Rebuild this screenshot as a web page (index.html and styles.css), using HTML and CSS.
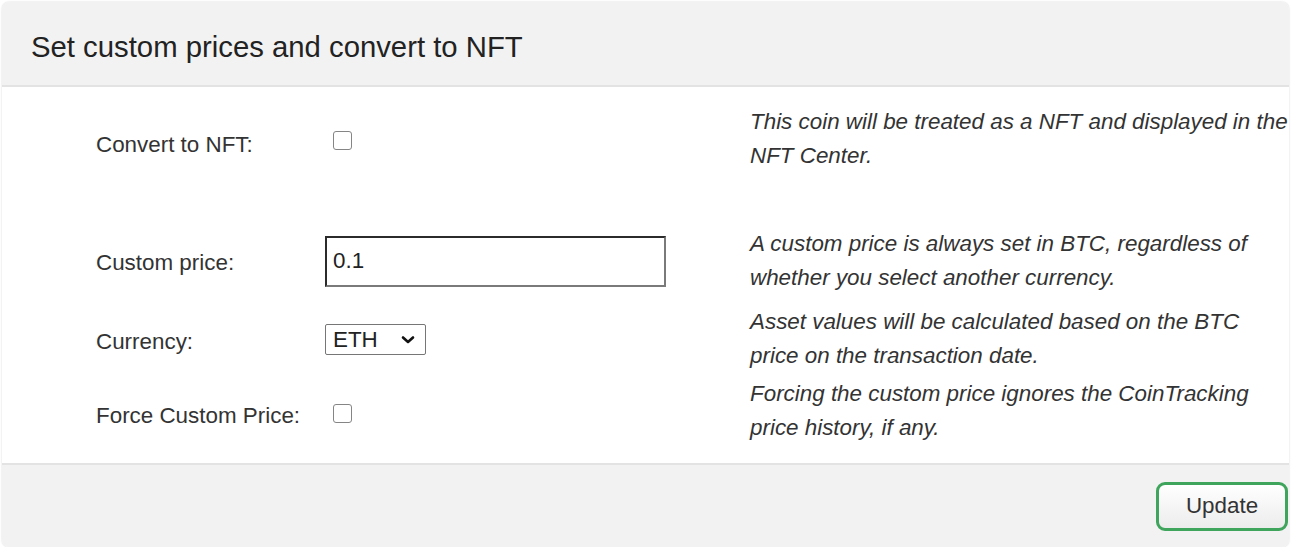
FILE: index.html
```html
<!DOCTYPE html>
<html>
<head>
<meta charset="utf-8">
<link rel="stylesheet" href="styles.css">
</head>
<body>
<div class="dialog">
  <div class="header">
    <h1 class="title">Set custom prices and convert to NFT</h1>
  </div>
  <div class="body">
    <div class="row row-nft">
      <label class="label">Convert to NFT:</label>
      <div class="control"><input type="checkbox" class="check"></div>
      <p class="desc">This coin will be treated as a NFT and displayed in the NFT Center.</p>
    </div>
    <div class="row row-price">
      <label class="label">Custom price:</label>
      <div class="control"><input type="text" class="text-input" value="0.1"></div>
      <p class="desc">A custom price is always set in BTC, regardless of whether you select another currency.</p>
    </div>
    <div class="row row-currency">
      <label class="label">Currency:</label>
      <div class="control">
        <span class="select-wrap">
          <select class="select"><option>ETH</option></select>
          <svg class="chev" width="14" height="10" viewBox="0 0 14 10"><path d="M2 2.5 L7 7 L12 2.5" fill="none" stroke="#111" stroke-width="2.6" stroke-linecap="round" stroke-linejoin="round"/></svg>
        </span>
      </div>
      <p class="desc">Asset values will be calculated based on the BTC price on the transaction date.</p>
    </div>
    <div class="row row-force">
      <label class="label">Force Custom Price:</label>
      <div class="control"><input type="checkbox" class="check"></div>
      <p class="desc">Forcing the custom price ignores the CoinTracking price history, if any.</p>
    </div>
  </div>
  <div class="footer">
    <button class="btn">Update</button>
  </div>
</div>
</body>
</html>
```

FILE: styles.css
```css
html, body {
  margin: 0;
  padding: 0;
  background: #ffffff;
  overflow: hidden;
}
body {
  font-family: "Liberation Sans", Arial, sans-serif;
  color: #333333;
}
.dialog {
  margin: 2px 2px 0 2px;
  height: 545px;
  border-radius: 7px;
  overflow: hidden;
  box-shadow: 0 0 2px rgba(0,0,0,0.18);
  display: flex;
  flex-direction: column;
  background: #ffffff;
}
.header {
  height: 83px;
  background: #f2f2f2;
  border-bottom: 2px solid #e3e3e3;
  display: flex;
  align-items: center;
  padding-left: 29px;
}
.title {
  margin: 0;
  font-size: 29.3px;
  font-weight: normal;
  color: #222222;
  padding-top: 7px;
}
.body {
  flex: none;
  height: 358px;
  padding: 18px 0 0 94px;
}
.row {
  display: grid;
  grid-template-columns: 229px 425px 538px;
  height: 68px;
  align-items: center;
}
.row-nft { margin-bottom: 54px; }
.row-price { margin-bottom: 10px; }
.row-currency { margin-bottom: 4px; }
.label {
  font-size: 22.4px;
  color: #333333;
  padding-top: 6px;
}
.row-price .label { padding-top: 4px; }
.row-nft .label { padding-top: 11px; }
.row-force .label { padding-top: 9px; }
.control {
  display: flex;
  align-items: center;
}
.check {
  -webkit-appearance: none;
  appearance: none;
  margin: 0 0 0 8px;
  width: 19px;
  height: 19px;
  box-sizing: border-box;
  border: 1.5px solid #858585;
  border-radius: 3px;
  background: #ffffff;
}
.row-nft .check { margin-top: 2px; }
.row-force .check { margin-top: 4px; }
.text-input {
  width: 341px;
  height: 51px;
  box-sizing: border-box;
  margin: 0;
  border-style: solid;
  border-width: 2px;
  border-color: #2b2b2b #7a7a7a #7a7a7a #2b2b2b;
  padding: 0 6px;
  font-family: "Liberation Sans", Arial, sans-serif;
  font-size: 22.4px;
  color: #222222;
  outline: none;
  background: #ffffff;
}
.select-wrap {
  position: relative;
  display: inline-block;
}
.select {
  -webkit-appearance: none;
  appearance: none;
  width: 101px;
  height: 31px;
  box-sizing: border-box;
  margin: 0;
  border: 1px solid #767676;
  border-radius: 2px;
  padding: 0 0 0 7px;
  font-family: "Liberation Sans", Arial, sans-serif;
  font-size: 22.4px;
  color: #222222;
  background: #ffffff;
  display: block;
}
.chev {
  position: absolute;
  right: 11px;
  top: 11px;
}
.desc {
  margin: 0;
  font-size: 22.4px;
  line-height: 34px;
  font-style: italic;
  color: #333333;
}
.footer {
  flex: 1;
  background: #f2f2f2;
  border-top: 2px solid #e3e3e3;
  display: flex;
  justify-content: flex-end;
  align-items: flex-start;
  padding: 17px 1px 0 0;
}
.btn {
  width: 132px;
  height: 49px;
  box-sizing: border-box;
  border: 3.5px solid #3fa45c;
  border-radius: 9px;
  background: linear-gradient(#ffffff, #ececec);
  font-family: "Liberation Sans", Arial, sans-serif;
  font-size: 22.4px;
  color: #333333;
  padding: 0 0 2px 0;
  margin: 0;
}
```
